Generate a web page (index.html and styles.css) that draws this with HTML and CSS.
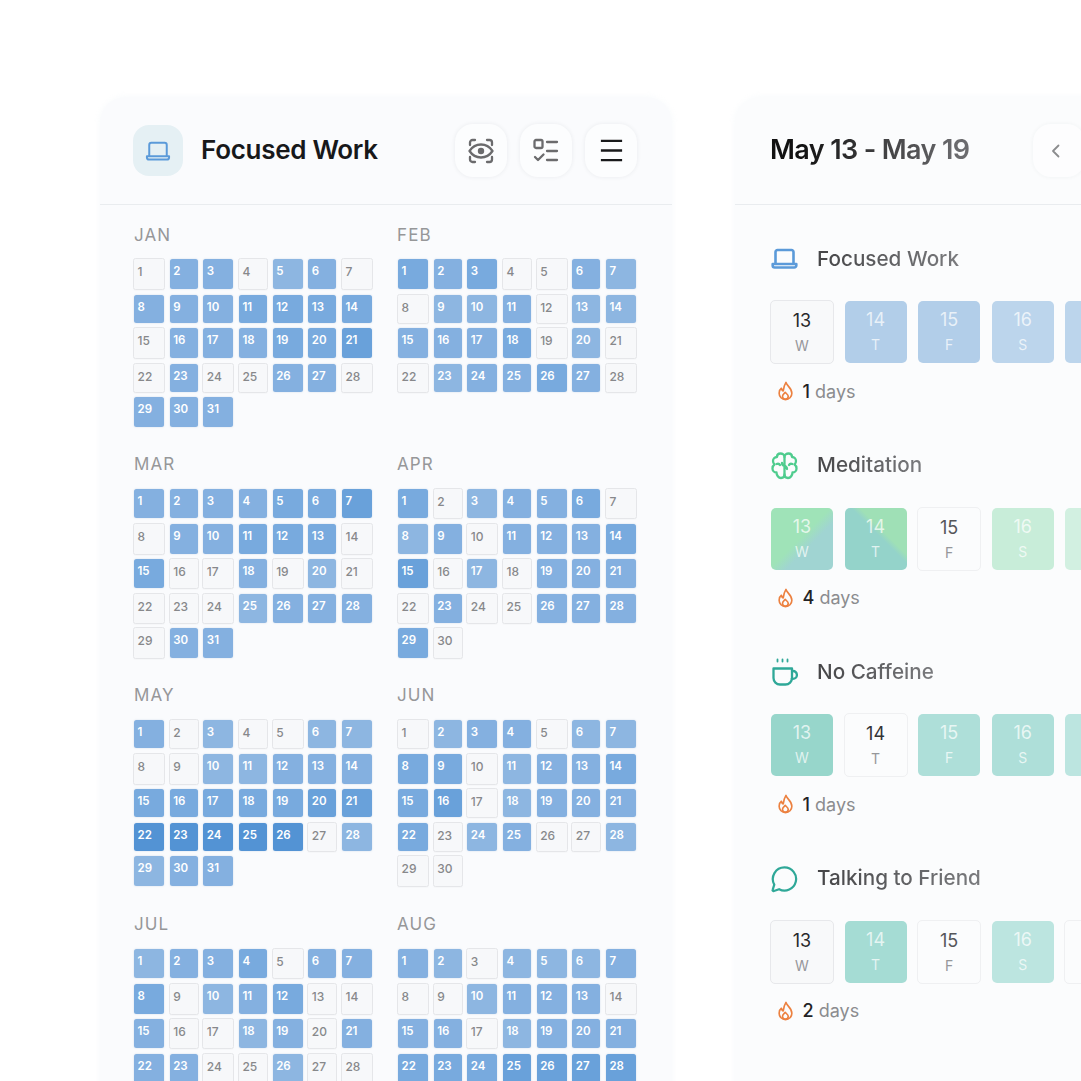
FILE: index.html
```html
<!DOCTYPE html>
<html lang="en">
<head>
<meta charset="utf-8">
<title>Habit tracker</title>
<link rel="stylesheet" href="styles.css">
</head>
<body>
<main class="stage">
<section class="panel year">
<header class="panel-head">
<div class="badge"><svg class="ico-lap" viewBox="0 0 24 24"><path d="M4.500 16.500V6.800a1.800 1.800 0 0 1 1.800-1.800h11.400a1.800 1.800 0 0 1 1.800 1.800v9.700"/><path d="M2.500 16.500h19v1a1.800 1.800 0 0 1-1.800 1.800H4.300a1.800 1.800 0 0 1-1.800-1.800z"/></svg></div>
<h1 class="year-title">Focused Work</h1>
<div class="tools">
<button class="tool"><svg viewBox="0 0 28 28" class="ico-tool"><path d="M3 8V5.500A2.500 2.500 0 0 1 5.500 3H8M20 3h2.500A2.500 2.500 0 0 1 25 5.500V8M25 20v2.500a2.500 2.500 0 0 1-2.500 2.500H20M8 25H5.500A2.500 2.500 0 0 1 3 22.500V20"/><path d="M2.500 14C5.500 9.500 9.500 7.500 14 7.500s8.500 2 11.500 6.500c-3 4.500-7 6.500-11.500 6.500S5.500 18.500 2.500 14z"/><circle cx="14" cy="14" r="3.200" class="fill"/></svg></button>
<button class="tool"><svg viewBox="0 0 28 28" class="ico-tool"><rect x="2.500" y="3" width="8" height="8" rx="1.500"/><path d="M15 5h10M15 14h10M15 23h10M3 20l3 3 5.500-5.500"/></svg></button>
<button class="tool"><svg viewBox="0 0 28 28" class="ico-menu"><path d="M3 4h22M3 14h22M3 24h22"/></svg></button>
</div>
</header>
<div class="months">
<div class="month r1"><h2>JAN</h2><div class="days">
<span class="day">1</span><span class="day s2">2</span><span class="day s2">3</span><span class="day">4</span><span class="day s1">5</span><span class="day s2">6</span><span class="day">7</span>
<span class="day s2">8</span><span class="day s2">9</span><span class="day s2">10</span><span class="day s3">11</span><span class="day s3">12</span><span class="day s3">13</span><span class="day s3">14</span>
<span class="day">15</span><span class="day s2">16</span><span class="day s2">17</span><span class="day s2">18</span><span class="day s3">19</span><span class="day s3">20</span><span class="day s4">21</span>
<span class="day">22</span><span class="day s2">23</span><span class="day">24</span><span class="day">25</span><span class="day s2">26</span><span class="day s2">27</span><span class="day">28</span>
<span class="day s2">29</span><span class="day s2">30</span><span class="day s2">31</span>
</div></div>
<div class="month r1"><h2>FEB</h2><div class="days">
<span class="day s3">1</span><span class="day s2">2</span><span class="day s3">3</span><span class="day">4</span><span class="day">5</span><span class="day s2">6</span><span class="day s1">7</span>
<span class="day">8</span><span class="day s1">9</span><span class="day s1">10</span><span class="day s2">11</span><span class="day">12</span><span class="day s1">13</span><span class="day s1">14</span>
<span class="day s2">15</span><span class="day s2">16</span><span class="day s2">17</span><span class="day s3">18</span><span class="day">19</span><span class="day s1">20</span><span class="day">21</span>
<span class="day">22</span><span class="day s1">23</span><span class="day s2">24</span><span class="day s2">25</span><span class="day s3">26</span><span class="day s2">27</span><span class="day">28</span>
</div></div>
<div class="month r2"><h2>MAR</h2><div class="days">
<span class="day s2">1</span><span class="day s2">2</span><span class="day s2">3</span><span class="day s2">4</span><span class="day s3">5</span><span class="day s3">6</span><span class="day s4">7</span>
<span class="day">8</span><span class="day s2">9</span><span class="day s2">10</span><span class="day s3">11</span><span class="day s3">12</span><span class="day s3">13</span><span class="day">14</span>
<span class="day s3">15</span><span class="day">16</span><span class="day">17</span><span class="day s2">18</span><span class="day">19</span><span class="day s1">20</span><span class="day">21</span>
<span class="day">22</span><span class="day">23</span><span class="day">24</span><span class="day s1">25</span><span class="day s2">26</span><span class="day s2">27</span><span class="day s2">28</span>
<span class="day">29</span><span class="day s2">30</span><span class="day s2">31</span>
</div></div>
<div class="month r2"><h2>APR</h2><div class="days">
<span class="day s3">1</span><span class="day">2</span><span class="day s1">3</span><span class="day s2">4</span><span class="day s2">5</span><span class="day s3">6</span><span class="day">7</span>
<span class="day s1">8</span><span class="day s2">9</span><span class="day">10</span><span class="day s2">11</span><span class="day s2">12</span><span class="day s2">13</span><span class="day s3">14</span>
<span class="day s4">15</span><span class="day">16</span><span class="day s1">17</span><span class="day">18</span><span class="day s2">19</span><span class="day s2">20</span><span class="day s2">21</span>
<span class="day">22</span><span class="day s2">23</span><span class="day">24</span><span class="day">25</span><span class="day s2">26</span><span class="day s2">27</span><span class="day s2">28</span>
<span class="day s3">29</span><span class="day">30</span>
</div></div>
<div class="month r3"><h2>MAY</h2><div class="days">
<span class="day s2">1</span><span class="day">2</span><span class="day s1">3</span><span class="day">4</span><span class="day">5</span><span class="day s1">6</span><span class="day s1">7</span>
<span class="day">8</span><span class="day">9</span><span class="day s1">10</span><span class="day s1">11</span><span class="day s2">12</span><span class="day s2">13</span><span class="day s2">14</span>
<span class="day s3">15</span><span class="day s3">16</span><span class="day s3">17</span><span class="day s3">18</span><span class="day s3">19</span><span class="day s4">20</span><span class="day s4">21</span>
<span class="day s5">22</span><span class="day s5">23</span><span class="day s5">24</span><span class="day s5">25</span><span class="day s5">26</span><span class="day">27</span><span class="day s1">28</span>
<span class="day s1">29</span><span class="day s2">30</span><span class="day s2">31</span>
</div></div>
<div class="month r3"><h2>JUN</h2><div class="days">
<span class="day">1</span><span class="day s1">2</span><span class="day s2">3</span><span class="day s2">4</span><span class="day">5</span><span class="day s1">6</span><span class="day s1">7</span>
<span class="day s3">8</span><span class="day s3">9</span><span class="day">10</span><span class="day s1">11</span><span class="day s2">12</span><span class="day s2">13</span><span class="day s3">14</span>
<span class="day s3">15</span><span class="day s4">16</span><span class="day">17</span><span class="day s1">18</span><span class="day s2">19</span><span class="day s2">20</span><span class="day s2">21</span>
<span class="day s3">22</span><span class="day">23</span><span class="day s1">24</span><span class="day s2">25</span><span class="day">26</span><span class="day">27</span><span class="day s1">28</span>
<span class="day">29</span><span class="day">30</span>
</div></div>
<div class="month r2"><h2>JUL</h2><div class="days">
<span class="day s1">1</span><span class="day s2">2</span><span class="day s2">3</span><span class="day s3">4</span><span class="day">5</span><span class="day s2">6</span><span class="day s2">7</span>
<span class="day s3">8</span><span class="day">9</span><span class="day s1">10</span><span class="day s2">11</span><span class="day s3">12</span><span class="day">13</span><span class="day">14</span>
<span class="day s2">15</span><span class="day">16</span><span class="day">17</span><span class="day s1">18</span><span class="day s2">19</span><span class="day">20</span><span class="day s2">21</span>
<span class="day s2">22</span><span class="day s2">23</span><span class="day">24</span><span class="day">25</span><span class="day s1">26</span><span class="day">27</span><span class="day">28</span>
</div></div>
<div class="month r2"><h2>AUG</h2><div class="days">
<span class="day s2">1</span><span class="day s1">2</span><span class="day">3</span><span class="day s1">4</span><span class="day s1">5</span><span class="day s1">6</span><span class="day s2">7</span>
<span class="day">8</span><span class="day">9</span><span class="day s1">10</span><span class="day s2">11</span><span class="day s2">12</span><span class="day s2">13</span><span class="day">14</span>
<span class="day s2">15</span><span class="day s2">16</span><span class="day">17</span><span class="day s1">18</span><span class="day s2">19</span><span class="day s2">20</span><span class="day s2">21</span>
<span class="day s3">22</span><span class="day s3">23</span><span class="day s3">24</span><span class="day s4">25</span><span class="day s4">26</span><span class="day s4">27</span><span class="day s4">28</span>
</div></div>
</div>
</section>

<section class="panel week">
<header class="panel-head week-head">
<h1 class="range">May 13 - May 19</h1>
<button class="tool prev"><svg viewBox="0 0 12 16" class="ico-prev"><path d="M8.500 2.500 3 8l5.500 5.500"/></svg></button>
</header>
<div class="habits">
<article class="habit">
<h3 class="habit-title"><svg viewBox="0 0 24 24" class="habit-ico blue"><path d="M4 16V5.800A1.800 1.800 0 0 1 5.800 4h12.400A1.800 1.800 0 0 1 20 5.800V16"/><path d="M1.500 16.500h21v1.200a1.800 1.800 0 0 1-1.800 1.800H3.300a1.800 1.800 0 0 1-1.800-1.800z"/></svg><span class="habit-name">Focused Work</span></h3>
<div class="cells">
<div class="cell off"><b>13</b><i>W</i></div>
<div class="cell blue2"><b>14</b><i>T</i></div>
<div class="cell blue2"><b>15</b><i>F</i></div>
<div class="cell blue3"><b>16</b><i>S</i></div>
<div class="cell blue3"></div>
</div>
<p class="streak"><svg viewBox="0 0 18 22" class="flame"><path d="M9.500 1.500c.5 3.500 6.500 6 6.500 12a7 7 0 0 1-14 0c0-2.500 1-4.500 2.500-5.500.3 1.500 1 2.500 2 3 .5-3.500 1-6.500 3-9.500z"/><path d="M9 20c-2 0-3.300-1.500-3.300-3.300 0-1.700 1.500-2.700 3-4.200 1 1.300 3.300 2.500 3.300 4.300C12 18.500 11 20 9 20z"/></svg><span><b>1</b> days</span></p>
</article>
<article class="habit">
<h3 class="habit-title"><svg viewBox="0 0 26 28" class="habit-ico green"><path d="M13 5C13 3 11 1.500 9 1.500 7 1.500 5.500 3 5.500 5 3 5 1.500 7 1.500 9c0 1.500.5 2.500 1.500 3.500C1.500 13.500 1 15 1 16.500c0 2 1.500 4 4 4C5 23 7 26 9.500 26c2 0 3.500-1.500 3.500-3.500 0 2 1.500 3.500 3.500 3.500 2.500 0 4.500-3 4.500-5.500 2.500 0 4-2 4-4 0-1.500-.5-3-2-4 1-1 1.500-2 1.500-3.500 0-2-1.500-4-4-4C20.500 3 19 1.500 17 1.500 15 1.500 13 3 13 5z"/><path d="M13 5v17.500M13 14c-1 0-2.500-1-2.500-3M13 14c1 0 2.500 1 2.500 3M5 12c1.500-.5 3 0 3.500 1M21 12c-1.500-.5-3 0-3.500 1"/></svg><span class="habit-name">Meditation</span></h3>
<div class="cells">
<div class="cell mix1"><b>13</b><i>W</i></div>
<div class="cell mix2"><b>14</b><i>T</i></div>
<div class="cell off light"><b>15</b><i>F</i></div>
<div class="cell mint1"><b>16</b><i>S</i></div>
<div class="cell mint2"></div>
</div>
<p class="streak"><svg viewBox="0 0 18 22" class="flame"><path d="M9.500 1.500c.5 3.500 6.500 6 6.500 12a7 7 0 0 1-14 0c0-2.500 1-4.500 2.500-5.500.3 1.500 1 2.500 2 3 .5-3.500 1-6.500 3-9.500z"/><path d="M9 20c-2 0-3.300-1.500-3.300-3.300 0-1.700 1.500-2.700 3-4.200 1 1.300 3.300 2.500 3.300 4.300C12 18.500 11 20 9 20z"/></svg><span><b>4</b> days</span></p>
</article>
<article class="habit">
<h3 class="habit-title"><svg viewBox="0 0 26 28" class="habit-ico teal"><path d="M2 10.500h18.500V20a6.500 6.500 0 0 1-6.500 6.500H8.500A6.500 6.500 0 0 1 2 20z"/><path d="M20.500 13h1a3.800 3.800 0 0 1 0 7.800h-1.200"/><path d="M6 1.500v3.500M11 1.500v3.500M16 1.500v3.500" class="steam"/></svg><span class="habit-name">No Caffeine</span></h3>
<div class="cells">
<div class="cell teal1"><b>13</b><i>W</i></div>
<div class="cell off light mid"><b>14</b><i>T</i></div>
<div class="cell teal2"><b>15</b><i>F</i></div>
<div class="cell teal2"><b>16</b><i>S</i></div>
<div class="cell teal3"></div>
</div>
<p class="streak"><svg viewBox="0 0 18 22" class="flame"><path d="M9.500 1.500c.5 3.500 6.500 6 6.500 12a7 7 0 0 1-14 0c0-2.500 1-4.500 2.500-5.500.3 1.500 1 2.500 2 3 .5-3.500 1-6.500 3-9.500z"/><path d="M9 20c-2 0-3.300-1.500-3.300-3.300 0-1.700 1.500-2.700 3-4.200 1 1.300 3.300 2.500 3.300 4.300C12 18.500 11 20 9 20z"/></svg><span><b>1</b> days</span></p>
</article>
<article class="habit">
<h3 class="habit-title"><svg viewBox="0 0 28 28" class="habit-ico teal"><path d="M14 2a12 12 0 1 1-5.600 22.600L3 26.500a1 1 0 0 1-1.300-1.300l1.700-5.400A12 12 0 0 1 14 2z"/></svg><span class="habit-name">Talking to Friend</span></h3>
<div class="cells">
<div class="cell off"><b>13</b><i>W</i></div>
<div class="cell teal2b"><b>14</b><i>T</i></div>
<div class="cell off light"><b>15</b><i>F</i></div>
<div class="cell teal3"><b>16</b><i>S</i></div>
<div class="cell off light"></div>
</div>
<p class="streak"><svg viewBox="0 0 18 22" class="flame"><path d="M9.500 1.500c.5 3.500 6.500 6 6.500 12a7 7 0 0 1-14 0c0-2.500 1-4.500 2.500-5.500.3 1.500 1 2.500 2 3 .5-3.500 1-6.500 3-9.500z"/><path d="M9 20c-2 0-3.300-1.500-3.300-3.300 0-1.700 1.500-2.700 3-4.200 1 1.300 3.300 2.500 3.300 4.300C12 18.500 11 20 9 20z"/></svg><span><b>2</b> days</span></p>
</article>
</div>
</section>
</main>
</body>
</html>
```
FILE: styles.css
```css
* { box-sizing: border-box; }
html, body { margin: 0; padding: 0; height: 1081px; overflow: hidden; background: #fff; }
body { font-family: Inter, "Liberation Sans", sans-serif; color: #1a1a1a; }
h1, h2, h3, p { margin: 0; }

.stage { display: flex; gap: 63px; width: 1081px; height: 1081px; padding: 97px 0 0 100px; overflow: hidden; }
.panel { flex: none; height: 1100px; background: #fafbfd; border-radius: 26px 26px 0 0; box-shadow: 0 0 6px rgba(245, 248, 251, .9); }
.year { width: 572px; }
.week { width: 520px; background: #fbfcfd; }

.panel-head { display: flex; align-items: center; height: 108px; padding: 0 35px 0 33px; border-bottom: 1px solid #e9ecef; }
.badge { display: flex; align-items: center; justify-content: center; width: 50px; height: 51px; border-radius: 16px; background: #e5f0f4; }
.ico-lap { width: 28px; height: 28px; fill: none; stroke: #5b9ad9; stroke-width: 1.700; stroke-linejoin: round; }
.year-title { margin: -2px 0 0 18px; font-size: 26px; font-weight: 600; letter-spacing: -.3px; color: #17181a; }
.tools { display: flex; gap: 13px; margin-left: auto; }
.tool { display: flex; align-items: center; justify-content: center; width: 52px; height: 53px; padding: 0; border: 0; border-radius: 18px; background: #fcfdfe; box-shadow: 0 0 4px rgba(40, 50, 60, .08); }
.ico-tool { width: 28px; height: 28px; fill: none; stroke: #6b6b6d; stroke-width: 2.300; stroke-linecap: round; stroke-linejoin: round; }
.ico-tool .fill { fill: #6b6b6d; stroke: none; }
.ico-menu { width: 27px; height: 27px; fill: none; stroke: #18191b; stroke-width: 2.500; }

.months { display: grid; grid-template-columns: 264px 264px; padding: 19px 0 0 34px; }
.month h2 { height: 22px; margin-bottom: 13px; font-size: 17px; line-height: 22px; font-weight: 400; letter-spacing: 1.100px; color: #969799; }
.month:nth-child(even) h2 { margin-left: -1px; }
.days { display: grid; grid-template-columns: 30px 28px 30px 28px 30px 28px 30px; column-gap: 5.670px; row-gap: 5.500px; }
.r1 { margin-bottom: 26px; }
.r1 .days { grid-template-rows: 30px 28px 30px 28px 30px; }
.r2 { margin-bottom: 26px; }
.r2 .days { grid-template-rows: 29px 30px 29px 29px 30px; padding-top: 1px; }
.r3 { margin-bottom: 27px; }
.r3 .days { grid-template-rows: 28px 30px 28px 28px 30px; padding-top: 1px; }

.day { margin: -1px; padding: 6px 0 0 3.500px; border: 1px solid #e5e6e9; border-radius: 2.500px; background: #f7f8fa; font-size: 12px; line-height: 14px; font-weight: 500; color: #87888b; box-shadow: 0 1px 1px rgba(0, 0, 0, .02); }
.s1, .s2, .s3, .s4, .s5 { margin: 0; padding: 5px 0 0 3.500px; border: 0; font-size: 11.500px; color: #fff; font-weight: 600; box-shadow: 0 0 2px rgba(130, 160, 200, .35); }
.s1 { background: #8db6e1; }
.s2 { background: #84b0e0; }
.s3 { background: #78aade; }
.s4 { background: #69a1da; }
.s5 { background: #5393d4; }

.week-head { padding: 0 0 0 35px; justify-content: flex-start; }
.range { margin-top: -2px; font-size: 27px; font-weight: 600; letter-spacing: -.62px; background: linear-gradient(90deg, #121212 15%, #6b6b6e 95%); -webkit-background-clip: text; background-clip: text; color: transparent; }
.prev { margin-left: 64px; background: #fdfdfe; box-shadow: 0 0 4px rgba(40, 50, 60, .05); }
.ico-prev { width: 12px; height: 16px; margin-right: 6px; fill: none; stroke: #8b8c8e; stroke-width: 1.800; stroke-linecap: round; stroke-linejoin: round; }

.habits { display: flex; flex-direction: column; gap: 47.670px; padding: 40px 0 0 36px; }
.habit-title { display: flex; align-items: center; gap: 19px; height: 28px; margin-bottom: 28px; }
.habit-ico { width: 27px; height: 28px; fill: none; stroke-width: 2.300; stroke-linecap: round; stroke-linejoin: round; }
.blue { stroke: #5b9ad9; }
.green { stroke: #4fcc8e; }
.teal { stroke: #2fa898; }
.steam { stroke-width: 1.800; stroke-dasharray: 2 1.800; }
.habit-name { margin-top: -2px; font-size: 20.700px; font-weight: 500; background: linear-gradient(90deg, #454547, #7a7b7e); -webkit-background-clip: text; background-clip: text; color: transparent; }

.cells { display: grid; grid-template-columns: repeat(5, 62px); column-gap: 11.600px; margin-bottom: 15px; }
.cell { display: flex; flex-direction: column; align-items: center; height: 62px; padding-top: 8px; border-radius: 5px; color: rgba(255, 255, 255, .72); }
.cell b { font-size: 18px; line-height: 22px; font-weight: 400; }
.cell i { margin-top: 5px; font-size: 14px; line-height: 18px; font-style: normal; }
.off { margin: -1px; padding-top: 9px; height: 64px; border: 1.500px solid #e7e8eb; background: #f8f9fa; color: #29292b; }
.off i { color: #96979a; }
.light { border-color: #eff0f2; background: #fbfcfd; color: #55565a; }
.mid { color: #333336; }
.blue2 { background: #b2cee9; }
.blue3 { background: #bcd5ec; }
.mix1 { background: linear-gradient(135deg, #9fe3b8 48%, #a0d4d2 62%); }
.mix2 { background: linear-gradient(45deg, #94d3ca 55%, #9fe0b6 62%); }
.mint1 { background: #c8edd9; }
.mint2 { background: #d2f0e1; }
.teal1 { background: #97d6cb; }
.teal2 { background: #aedfd9; }
.teal2b { background: #a5dcd4; }
.teal3 { background: #bce5e0; }

.streak { display: flex; align-items: center; gap: 8.500px; height: 26px; padding-left: 6px; font-size: 18px; color: #8b8c8f; }
.streak b { font-weight: 500; color: #232325; }
.flame { width: 17px; height: 20px; fill: none; stroke: #ec8140; stroke-width: 1.800; stroke-linejoin: round; }
```
